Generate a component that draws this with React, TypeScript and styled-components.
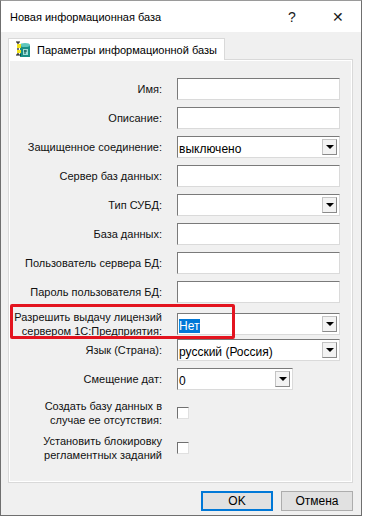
import React from 'react'
import styled, { createGlobalStyle } from 'styled-components'

const GlobalStyle = createGlobalStyle`
  html, body {
    margin: 0;
    padding: 0;
    background: #ffffff;
  }
  body {
    font-family: "Liberation Sans", Arial, sans-serif;
    font-size: 11px;
    color: #000;
  }
`

const Window = styled.div`
  width: 362px;
  height: 516px;
  box-sizing: border-box;
  border: 1px solid #6f6f6f;
  border-top-color: #9a9a9a;
  background: #f0f0f0;
  display: flex;
  flex-direction: column;
`

const TitleBar = styled.div`
  height: 31px;
  background: #ffffff;
  display: flex;
  align-items: center;
  padding-left: 9px;
  font-size: 11px;
`

const Title = styled.div`
  flex: 1;
`

const TitleButton = styled.div`
  width: 46px;
  height: 31px;
  display: flex;
  align-items: center;
  justify-content: center;
  font-size: 14px;
  color: #1a1a1a;
`

const Body = styled.div`
  flex: 1;
  padding: 6px 8px 0 7px;
  display: flex;
  flex-direction: column;
`

const TabStrip = styled.div`
  display: flex;
  height: 21px;
`

const Tab = styled.div`
  height: 21px;
  padding: 0 7px 0 6px;
  background: #ffffff;
  border: 1px solid #d9d9d9;
  border-bottom: none;
  display: flex;
  align-items: center;
  gap: 4px;
  font-size: 11px;
  margin-bottom: -1px;
  position: relative;
  z-index: 1;
`

const Panel = styled.div`
  height: 424px;
  background: #f0f0f0;
  border: 1px solid #d9d9d9;
  box-shadow: inset 1px 1px 0 #ffffff, inset -1px -1px 0 #ffffff;
  padding-top: 18px;
  box-sizing: border-box;
  display: flex;
  flex-direction: column;
  gap: 7px;
`

const Row = styled.div<{ $h?: number; $mt?: number }>`
  display: grid;
  grid-template-columns: 153px 163px;
  column-gap: 15px;
  align-items: center;
  height: ${p => p.$h ?? 22}px;
  margin-top: ${p => p.$mt ?? 0}px;
`

const Label = styled.div`
  text-align: right;
  line-height: 14px;
  white-space: nowrap;
  color: #111;
`

const Field = styled.div<{ $w?: number }>`
  width: ${p => p.$w ?? 163}px;
  height: 22px;
  box-sizing: border-box;
  background: #ffffff;
  border: 1px solid #dadada;
  border-top-color: #7a7a7a;
  border-left-color: #7a7a7a;
  display: flex;
  align-items: center;
  font-family: "Liberation Sans", Arial, sans-serif;
  font-size: 12px;
  padding-left: 1px;
`

const FieldText = styled.span<{ $selected?: boolean }>`
  flex: 1;
  margin-top: 3px;
  & > span {
    background: ${p => (p.$selected ? '#0078d7' : 'transparent')};
    color: ${p => (p.$selected ? '#ffffff' : '#000000')};
    padding-right: 1px;
  }
`

const DropButton = styled.div`
  width: 15px;
  height: 16px;
  margin-right: 2px;
  box-sizing: border-box;
  background: #f3f3f3;
  border: 1px solid #c4c4c4;
  border-right-color: #8a8a8a;
  border-bottom-color: #8a8a8a;
  display: flex;
  align-items: center;
  justify-content: center;
`

const Arrow = styled.div`
  width: 0;
  height: 0;
  border-left: 4px solid transparent;
  border-right: 4px solid transparent;
  border-top: 4px solid #000;
`

const CheckBox = styled.div`
  width: 12px;
  height: 12px;
  box-sizing: border-box;
  background: #ffffff;
  border: 1px solid #e0e0e0;
  border-top-color: #707070;
  border-left-color: #707070;
`

const Highlight = styled.div`
  position: absolute;
  left: 1px;
  top: -6px;
  width: 225px;
  height: 35px;
  box-sizing: border-box;
  border: 3px solid #e3141f;
  border-radius: 2px;
  pointer-events: none;
`

const HighlightRow = styled(Row)`
  position: relative;
`

const Footer = styled.div`
  display: flex;
  justify-content: flex-end;
  gap: 8px;
  padding-top: 8px;
`

const Button = styled.div<{ $default?: boolean }>`
  width: 72px;
  height: 20px;
  box-sizing: border-box;
  background: #e1e1e1;
  border: 1px solid ${p => (p.$default ? '#0078d7' : '#adadad')};
  box-shadow: ${p => (p.$default ? 'inset 0 0 0 1px #0078d7' : 'none')};
  display: flex;
  align-items: center;
  justify-content: center;
  font-size: 12px;
`

const BaseIcon = () => (
  <svg width="18" height="17" viewBox="0 0 18 17">
    <rect x="5" y="4" width="10" height="12" fill="#1a8f86" />
    <ellipse cx="10" cy="4" rx="5" ry="2" fill="#5fc7bd" />
    <rect x="8" y="8" width="5" height="6" fill="#9fe0d8" />
    <path d="M1 1 L5 1 M3 1 L3 14 M1 14 L6 14" stroke="#111" strokeWidth="1.2" fill="none" />
    <path d="M2 3 L6 3 L6 7 L2 7 Z" fill="#f3e21a" />
    <path d="M2 9 L6 9 L6 12 L2 12 Z" fill="#f3e21a" />
    <path d="M9 10 L12 10 M10 9 L10 13" stroke="#0b4f4a" strokeWidth="1" />
  </svg>
)

interface IInputProps {
  value?: string
  combo?: boolean
  selected?: boolean
  width?: number
}

const Input: React.FC<IInputProps> = (props: IInputProps) => {
  return (
    <Field $w={props.width}>
      <FieldText $selected={props.selected}>
        <span>{props.value}</span>
      </FieldText>
      {props.combo && (
        <DropButton>
          <Arrow />
        </DropButton>
      )}
    </Field>
  )
}

export default function App() {
  return (
    <>
      <GlobalStyle />
      <Window>
        <TitleBar>
          <Title>Новая информационная база</Title>
          <TitleButton>?</TitleButton>
          <TitleButton>✕</TitleButton>
        </TitleBar>
        <Body>
          <TabStrip>
            <Tab>
              <BaseIcon />
              Параметры информационной базы
            </Tab>
          </TabStrip>
          <Panel>
            <Row>
              <Label>Имя:</Label>
              <Input />
            </Row>
            <Row>
              <Label>Описание:</Label>
              <Input />
            </Row>
            <Row>
              <Label>Защищенное соединение:</Label>
              <Input value="выключено" combo />
            </Row>
            <Row>
              <Label>Сервер баз данных:</Label>
              <Input />
            </Row>
            <Row>
              <Label>Тип СУБД:</Label>
              <Input combo />
            </Row>
            <Row>
              <Label>База данных:</Label>
              <Input />
            </Row>
            <Row>
              <Label>Пользователь сервера БД:</Label>
              <Input />
            </Row>
            <Row>
              <Label>Пароль пользователя БД:</Label>
              <Input />
            </Row>
            <HighlightRow>
              <Highlight />
              <Label>
                Разрешить выдачу лицензий
                <br />
                сервером 1С:Предприятия:
              </Label>
              <Input value="Нет" combo selected />
            </HighlightRow>
            <Row>
              <Label>Язык (Страна):</Label>
              <Input value="русский (Россия)" combo />
            </Row>
            <Row>
              <Label>Смещение дат:</Label>
              <Input value="0" combo width={116} />
            </Row>
            <Row $h={30} $mt={1}>
              <Label>
                Создать базу данных в
                <br />
                случае ее отсутствия:
              </Label>
              <CheckBox />
            </Row>
            <Row $h={30} $mt={-2}>
              <Label>
                Установить блокировку
                <br />
                регламентных заданий
              </Label>
              <CheckBox />
            </Row>
          </Panel>
          <Footer>
            <Button $default>OK</Button>
            <Button>Отмена</Button>
          </Footer>
        </Body>
      </Window>
    </>
  )
}
